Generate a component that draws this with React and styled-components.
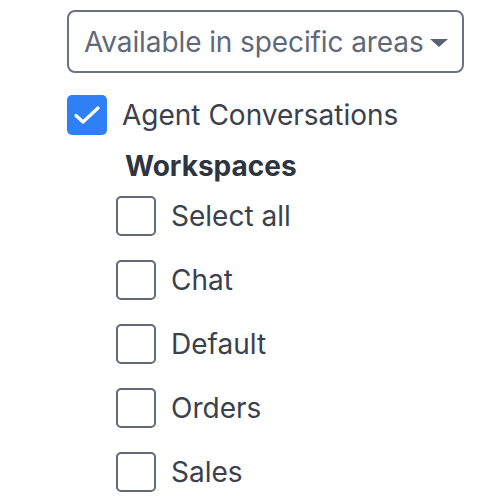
import styled, { createGlobalStyle } from "styled-components"

const Global = createGlobalStyle`
  body {
    margin: 0;
    background: #fff;
    font-family: Inter, "Noto Sans", sans-serif;
  }
`

const Page = styled.div`
  padding: 10px 0 0 67px;
  display: flex;
  flex-direction: column;
`

const Select = styled.div`
  box-sizing: border-box;
  width: 397px;
  height: 63px;
  border: 2px solid #6b7380;
  border-radius: 8px;
  display: flex;
  align-items: center;
  justify-content: space-between;
  padding: 0 14px 0 15px;
  color: #5f6979;
  font-size: 28px;
  letter-spacing: -0.1px;
  white-space: nowrap;
`

const Caret = styled.span`
  width: 0;
  height: 0;
  border-left: 9px solid transparent;
  border-right: 9px solid transparent;
  border-top: 8px solid #5a6372;
  margin-top: 3px;
`

const Row = styled.label`
  display: flex;
  align-items: center;
  gap: 15px;
  height: 40px;
  font-size: 28px;
  color: #3a414d;
`

const Box = styled.span`
  box-sizing: border-box;
  width: 40px;
  height: 40px;
  flex: none;
  border-radius: 5px;
  display: flex;
  align-items: center;
  justify-content: center;
  background: ${p => (p.$checked ? "#2f7ff6" : "#fff")};
  border: ${p => (p.$checked ? "none" : "2px solid #636a75")};
`

const Main = styled.div`
  margin-top: 22px;
`

const Group = styled.div`
  margin-top: 16px;
  padding-left: 49px;
  display: flex;
  flex-direction: column;
  gap: 24px;
`

const Heading = styled.div`
  font-size: 28px;
  font-weight: 700;
  color: #2f3540;
  line-height: 30px;
  padding-left: 9px;
  margin-bottom: -9px;
`

const Check = () => (
  <svg width="26" height="20" viewBox="0 0 26 20" fill="none">
    <path d="M2 10.5 L9 17 L24 3" stroke="#fff" strokeWidth="3.2" strokeLinecap="round" strokeLinejoin="round" />
  </svg>
)

const workspaces = ["Select all", "Chat", "Default", "Orders", "Sales"]

export default function App() {
  return (
    <Page>
      <Global />
      <Select>
        <span>Available in specific areas</span>
        <Caret />
      </Select>
      <Main>
        <Row>
          <Box $checked>
            <Check />
          </Box>
          Agent Conversations
        </Row>
      </Main>
      <Group>
        <Heading>Workspaces</Heading>
        {workspaces.map(w => (
          <Row key={w}>
            <Box />
            {w}
          </Row>
        ))}
      </Group>
    </Page>
  )
}
